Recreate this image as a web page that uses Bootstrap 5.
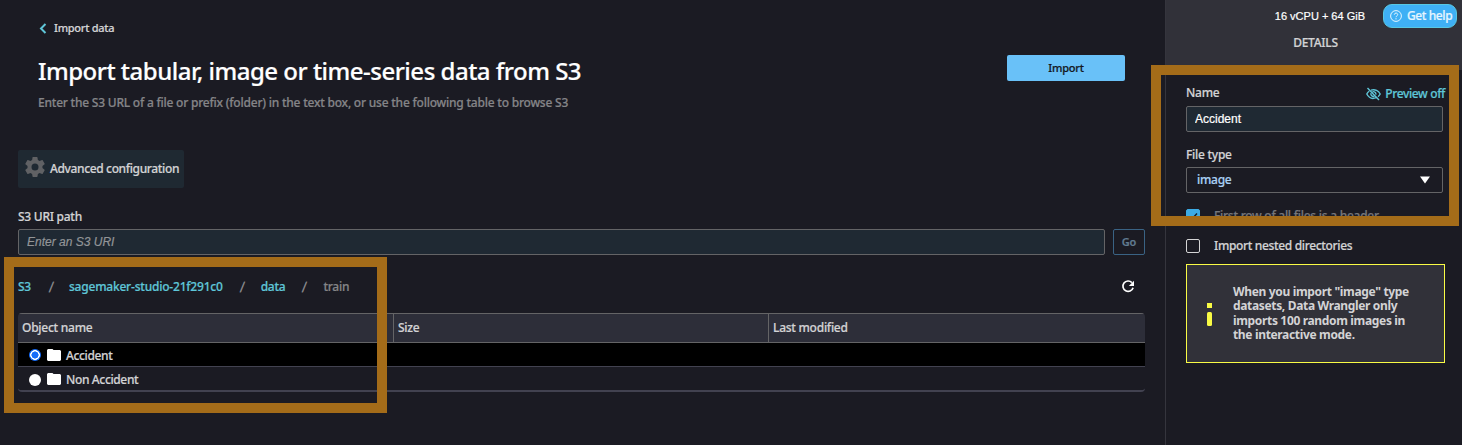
<!DOCTYPE html>
<html lang="en">
<head>
<meta charset="utf-8">
<meta name="viewport" content="width=device-width, initial-scale=1">
<title>Import data</title>
<link href="https://cdn.jsdelivr.net/npm/bootstrap@5.3.0/dist/css/bootstrap.min.css" rel="stylesheet">
<style>
  body{background:#1b1b23;color:#d3d3d5;font:500 12px/20px "Noto Sans","Open Sans",sans-serif;letter-spacing:-.26px;height:445px;overflow:hidden;white-space:nowrap;-webkit-text-stroke:.2px currentColor}
  svg{display:block;flex:none}
  .pane-main{width:1165px;padding:18px 20px 0 18px}
  .pane-side{width:297px;border-left:1px solid #35353d}
  .intro{padding-left:20px}
  .back-link{font-size:11px;letter-spacing:-.26px}
  .page-title{font-size:24px;line-height:36px;font-weight:500;color:#fff;letter-spacing:-.5px;margin:15px 0 4px}
  .page-sub{color:#858588;letter-spacing:-.22px}
  .btn-import{width:118px;height:26px;margin:37px 20px 0 0;background:#69c1f8;color:#14181f;border-radius:2px;font-size:11px;font-weight:500;letter-spacing:-.2px;line-height:24px}
  .btn-advanced{width:166px;height:38px;background:#1f2932;border-radius:2px;color:#d3d3d5;font-size:12px;font-weight:500;letter-spacing:-.36px;padding:0 0 0 6px;margin-top:37px}
  .btn:hover{background:inherit}
  .field{height:26px;border:1px solid #646466;border-radius:2px;background:#1f2933;line-height:24px;font-family:"Liberation Sans",Arial,sans-serif;font-size:12px;font-weight:400;letter-spacing:0;padding:0 8px}
  .field::placeholder{color:#929598;font-style:italic;opacity:1}
  .field:focus{background:#1f2933;color:#fff;box-shadow:none}
  .btn-go{flex:none;width:32px;height:26px;border:1px solid #3a6384;border-radius:2px;color:#617b91;font-size:11px;font-weight:600;letter-spacing:-.2px;line-height:22px}
  .cyan,.crumbs a{color:#5fc6d8;text-decoration:none}
  .crumbs{margin:22px 0 16px}
  .crumbs .bucket{letter-spacing:-.21px}
  .crumbs .sep{color:#929294;font-family:"Liberation Sans",sans-serif;font-size:14px;width:7px;text-align:center;letter-spacing:0;transform:skewX(-8deg)}
  .objects{border-radius:4px;overflow:hidden;border-bottom:2px solid #424250;height:79px}
  .objects-head{height:30px;background:#2d2e39;border:solid #646466;border-width:1px 0;line-height:28px}
  .objects-head>div{padding-left:4px}
  .objects-head>div+div{border-left:1px solid #646466}
  .c1{width:375px}.c2{width:375px}
  .obj{height:24px;padding-left:11px}
  .obj>span:last-child{letter-spacing:-.36px;padding-top:2px}
  .obj.picked{background:#000;border-bottom:1px solid #424250}
  .dot{width:12px;height:12px;border-radius:50%;background:#fff;margin-top:1px}
  .dot.on{background:radial-gradient(circle,#176dfa 3.300px,#fff 3.800px,#fff 4.600px,#176dfa 5.100px)}
  .side-head{height:70px;background:#313139}
  .vcpu{font:400 11px/20px "Liberation Sans",Arial,sans-serif;letter-spacing:0;color:#fff}
  .help-pill{width:74px;height:24px;background:#3fb0f5;border:1px solid #58c7e2;border-radius:9px;color:#e6f6ff;margin:4px 5px 0 18px;padding-left:6px;letter-spacing:-.4px}
  .side-body{padding:13px 17px 0 20px}
  .preview{padding-top:2px;height:20px;letter-spacing:-.36px}
  .pick{height:26px;width:257px;border:1px solid #646466;border-radius:2px;color:#a9d1f5;padding:0 12px 0 10px}
  .tick{width:14px;height:14px;border:1px solid #d5d5d6;border-radius:2px}
  .tick.on{background:#3cabe4;border-color:#3cabe4}
  .notice{width:259px;height:99px;background:#313139;border:1px solid #f9fb45;font-weight:700;line-height:14.3px;padding-left:20px;letter-spacing:-.34px;-webkit-text-stroke:0}
  .frame{position:absolute;border:10px solid #a46c19;pointer-events:none}
  .frame-table{left:4px;top:257px;width:383px;height:156px}
  .frame-side{left:1151px;top:65px;width:308px;height:161px}
</style>
</head>
<body class="position-relative">
<div class="d-flex h-100">
  <main class="pane-main flex-shrink-0">
    <div class="d-flex justify-content-between">
      <div class="intro">
        <div class="d-flex align-items-center back-link">
          <svg width="16" height="20" viewBox="0 0 16 20" fill="none" stroke="#5fc6d8" stroke-width="2"><path d="M7.500 6 3 10.500 7.500 15"/></svg>
          <span>Import data</span>
        </div>
        <h1 class="page-title">Import tabular, image or time-series data from S3</h1>
        <div class="page-sub">Enter the S3 URL of a file or prefix (folder) in the text box, or use the following table to browse S3</div>
      </div>
      <button class="btn btn-import p-0">Import</button>
    </div>
    <button class="btn btn-advanced d-flex align-items-center">
      <svg width="20" height="20" viewBox="2 2 20 20" fill="#606164" style="margin-top:-4px"><path d="M19.430 12.980c.04-.32.070-.64.070-.98s-.03-.66-.07-.98l2.110-1.650c.19-.15.240-.42.120-.64l-2-3.460c-.12-.22-.39-.3-.61-.22l-2.490 1c-.52-.4-1.080-.73-1.690-.98l-.38-2.650A.488.488 0 0 0 14 2h-4c-.25 0-.46.180-.49.420l-.38 2.650c-.61.250-1.170.59-1.690.98l-2.490-1c-.23-.09-.49 0-.61.220l-2 3.460c-.13.220-.07.490.120.640l2.110 1.650c-.04.320-.07.650-.07.980s.03.660.070.980l-2.110 1.650c-.19.150-.24.420-.12.640l2 3.460c.12.220.390.300.610.220l2.490-1c.52.400 1.080.730 1.690.980l.38 2.650c.03.240.240.420.490.420h4c.25 0 .46-.18.490-.42l.38-2.650c.61-.25 1.170-.59 1.690-.98l2.490 1c.23.090.490 0 .61-.22l2-3.460c.12-.22.070-.49-.12-.64zM12 15.500a3.500 3.500 0 1 1 0-7 3.500 3.500 0 0 1 0 7z"/></svg>
      <span style="margin-left:5px">Advanced configuration</span>
    </button>
    <div style="margin-top:19px">S3 URI path</div>
    <div class="d-flex gap-2" style="margin-top:2px">
      <input class="form-control field flex-grow-1" placeholder="Enter an S3 URI" aria-label="S3 URI path">
      <button class="btn btn-go p-0">Go</button>
    </div>
    <div class="crumbs d-flex align-items-center">
      <a href="#">S3</a><span class="sep" style="margin-left:17px">/</span>
      <a href="#" class="bucket" style="margin-left:14px">sagemaker-studio-21f291c0</a><span class="sep" style="margin-left:16px">/</span>
      <a href="#" style="margin-left:15px">data</a><span class="sep" style="margin-left:16px">/</span>
      <span style="margin-left:15px;color:#858588">train</span>
      <svg class="ms-auto me-2" width="18" height="18" viewBox="0 0 18 18" fill="none" stroke="#fff" stroke-width="1.700"><path d="M12.900 4.600A5.200 5.200 0 1 0 14.100 9.800"/><path d="M15 2.800V8H9.800z" fill="#fff" stroke="none"/></svg>
    </div>
    <div class="objects">
      <div class="objects-head d-flex"><div class="c1">Object name</div><div class="c2">Size</div><div>Last modified</div></div>
      <div class="obj picked d-flex align-items-center"><span class="dot on"></span>
        <svg style="margin:0 5px 0 6px" width="14" height="12" fill="#fff"><path d="M1 0h4.500l1 1H13l1 1v9l-1 1H1l-1-1V1z"/></svg><span>Accident</span></div>
      <div class="obj d-flex align-items-center"><span class="dot"></span>
        <svg style="margin:-1px 5px 0 6px" width="14" height="12" fill="#fff"><path d="M1 0h4.500l1 1H13l1 1v9l-1 1H1l-1-1V1z"/></svg><span>Non Accident</span></div>
    </div>
  </main>
  <aside class="pane-side flex-shrink-0">
    <div class="side-head">
      <div class="d-flex justify-content-end">
        <span class="vcpu" style="margin-top:6px">16 vCPU + 64 GiB</span>
        <div class="help-pill d-flex align-items-center">
          <svg width="12" height="12" viewBox="0 0 12 12" fill="none" stroke="#e6f6ff" style="margin-top:-1px"><circle cx="6" cy="6" r="5.400"/><path d="M4.300 4.700C4.300 2.500 7.700 2.600 7.700 4.600 7.700 5.900 6 5.900 6 7.200M6 8.200v1.200"/></svg>
          <span style="margin-left:5px">Get help</span>
        </div>
      </div>
      <div class="text-center" style="margin-top:5px;padding-left:3px">DETAILS</div>
    </div>
    <div class="side-body">
      <div class="d-flex justify-content-between">
        <span>Name</span>
        <span class="cyan d-flex align-items-center preview">
          <svg width="15" height="14" viewBox="0 0 15 14" fill="none" stroke="#5fc6d8" stroke-width="1.400"><path d="M1.500 1 13 13M5 3.200C9 1.600 12.600 4 14.200 7c-.6 1.200-1.300 2-2.200 2.700M3.200 4.200C2.200 4.900 1.400 5.800.8 7c2 3.800 5.700 5.200 9.400 3.700M6.500 4.800A2.500 2.500 0 0 1 9.800 7.700M5 6.300a2.500 2.500 0 0 0 3.300 3"/></svg>
          <span style="margin-left:4px">Preview off</span></span>
      </div>
      <input class="form-control field" style="width:257px;margin-top:3px;color:#fff" value="Accident" aria-label="Name">
      <div style="margin-top:13px">File type</div>
      <div class="pick d-flex align-items-center justify-content-between" style="margin-top:2px"><span>image</span>
        <svg width="10" height="8"><path d="M0 .5h10L5 7.500z" fill="#fff"/></svg></div>
      <div class="d-flex align-items-center" style="margin-top:13px"><span class="tick on"><svg width="12" height="12" fill="none" stroke="#14202a" stroke-width="1.500"><path d="M2.500 6.500 5 9l5-5.500"/></svg></span>
        <span style="margin-left:14px;color:#77777b">First row of all files is a header</span></div>
      <div class="d-flex align-items-center" style="margin-top:10px"><span class="tick"></span><span style="margin-left:14px;letter-spacing:-.34px">Import nested directories</span></div>
      <div class="notice d-flex align-items-center" style="margin-top:8px">
        <svg width="5" height="24" fill="#f9fb45"><path d="M0 1h5v5H0z"/><rect y="10" width="5" height="14" rx="1.500"/></svg>
        <div style="margin-left:21px">When you import "image" type<br>datasets, Data Wrangler only<br>imports 100 random images in<br>the interactive mode.</div>
      </div>
    </div>
  </aside>
</div>
<div class="frame frame-table"></div>
<div class="frame frame-side"></div>
<script src="https://cdn.jsdelivr.net/npm/bootstrap@5.3.0/dist/js/bootstrap.bundle.min.js"></script>
</body>
</html>
